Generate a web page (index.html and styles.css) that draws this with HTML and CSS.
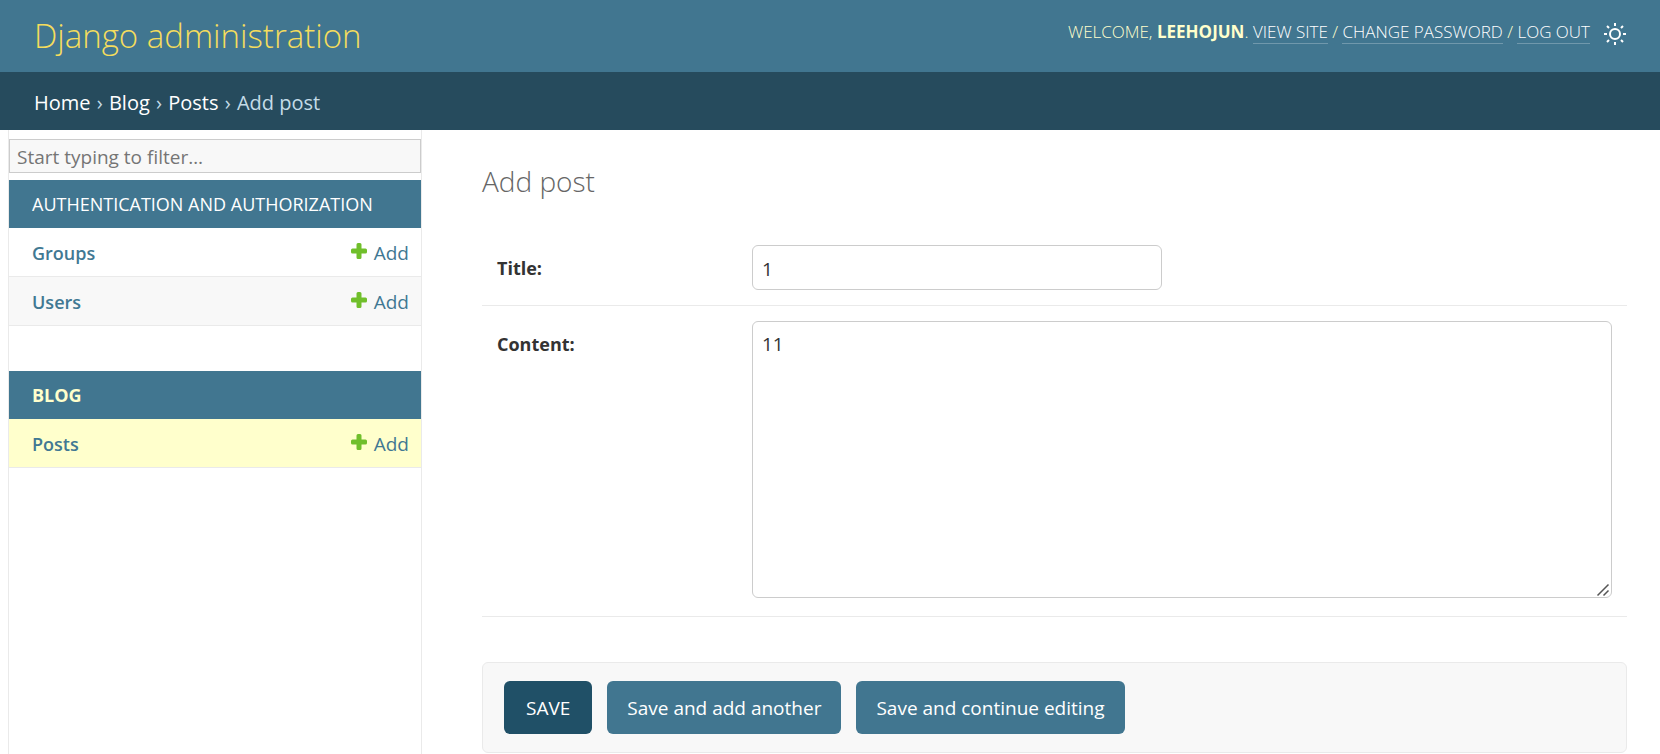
FILE: index.html
```html
<!DOCTYPE html>
<html lang="en">
<head>
<meta charset="utf-8">
<title>Add post | Django site admin</title>
<meta name="viewport" content="width=device-width, initial-scale=1">
<link rel="stylesheet" href="styles.css">
</head>
<body>
<svg class="sprite" aria-hidden="true">
  <symbol id="icon-add" viewBox="0 0 16 16">
    <path fill="#70bf2b" d="M7 0h2a1.500 1.500 0 0 1 1.500 1.500v4h4a1.500 1.500 0 0 1 1.500 1.500v2a1.500 1.500 0 0 1-1.500 1.500h-4v4a1.500 1.500 0 0 1-1.500 1.500h-2a1.500 1.500 0 0 1-1.500-1.500v-4h-4a1.500 1.500 0 0 1-1.500-1.500v-2a1.500 1.500 0 0 1 1.500-1.500h4v-4a1.500 1.500 0 0 1 1.500-1.500z"/>
  </symbol>
</svg>
<header class="header">
  <h1 class="site-name"><a href="#">Django administration</a></h1>
  <div class="user-tools">
    <div>Welcome, <strong>leehojun</strong>. <a href="#">View site</a> / <a href="#">Change password</a> / <a href="#">Log out</a></div>
    <button class="theme-toggle" type="button" aria-label="Toggle theme">
      <svg viewBox="0 0 24 24" width="24" height="24" fill="none" stroke="#fff" stroke-width="2">
        <circle cx="12" cy="12" r="5"/>
        <path d="M12 1v3M12 20v3M1 12h3M20 12h3M4 4l2 2M18 18l2 2M4 20l2-2M18 6l2-2"/>
      </svg>
    </button>
  </div>
</header>
<nav class="breadcrumbs" aria-label="Breadcrumbs">
  <a href="#">Home</a> <span class="separator">›</span>
  <a href="#">Blog</a> <span class="separator">›</span>
  <a href="#">Posts</a> <span class="separator">›</span>
  Add post
</nav>
<div class="main">
  <nav class="sidebar" aria-label="Sidebar">
    <input class="nav-filter" type="search" placeholder="Start typing to filter…" aria-label="Filter navigation items">
    <section class="app">
      <h2 class="app-name"><a href="#">Authentication and Authorization</a></h2>
      <div class="model"><a class="model-name" href="#">Groups</a><a class="add-link" href="#"><svg><use href="#icon-add"/></svg>Add</a></div>
      <div class="model model-alt"><a class="model-name" href="#">Users</a><a class="add-link" href="#"><svg><use href="#icon-add"/></svg>Add</a></div>
    </section>
    <section class="app">
      <h2 class="app-name app-current"><a href="#">Blog</a></h2>
      <div class="model model-current"><a class="model-name" href="#">Posts</a><a class="add-link" href="#"><svg><use href="#icon-add"/></svg>Add</a></div>
    </section>
  </nav>
  <main class="content">
    <h2 class="page-title">Add post</h2>
    <form>
      <div class="form-row">
        <label for="id_title">Title:</label>
        <input class="field text-field" id="id_title" type="text" value="1">
      </div>
      <div class="form-row form-row-area">
        <label for="id_content">Content:</label>
        <textarea class="field area-field" id="id_content">11</textarea>
      </div>
      <div class="submit-row">
        <button class="button button-default" type="submit">SAVE</button>
        <button class="button" type="submit">Save and add another</button>
        <button class="button" type="submit">Save and continue editing</button>
      </div>
    </form>
  </main>
</div>
</body>
</html>
```
FILE: styles.css
```css
* {
  box-sizing: border-box;
}

html {
  height: 100%;
}

body {
  display: flex;
  flex-direction: column;
  min-height: 100%;
  margin: 0;
  background: #fff;
  color: #333;
  font-family: "Open Sans", "Noto Sans", sans-serif;
  font-size: 19px;
  line-height: 28px;
}

a {
  color: #417893;
  text-decoration: none;
}

button,
input,
textarea {
  font: inherit;
}

.sprite {
  display: none;
}

.header {
  display: flex;
  justify-content: space-between;
  align-items: flex-start;
  padding: 0 33px 0 34px;
  background: #417690;
  color: #ffc;
}

.site-name {
  margin: 0;
  font-size: 33px;
  font-weight: 300;
  line-height: 72px;
}

.site-name a {
  color: #f5dd5d;
}

.user-tools {
  display: flex;
  gap: 13px;
  padding-top: 20px;
  font-size: 17px;
  font-weight: 300;
  line-height: 24px;
  text-transform: uppercase;
}

.user-tools strong {
  font-weight: 700;
}

.user-tools a {
  border-bottom: 1px solid rgba(255, 255, 255, 0.25);
  color: #fff;
}

.theme-toggle {
  display: flex;
  padding: 2px 0 0;
  border: 0;
  background: none;
}

.breadcrumbs {
  padding: 17px 34px 13px;
  background: #264b5d;
  color: #c4dce8;
  font-size: 20px;
}

.breadcrumbs a {
  color: #fff;
}

.separator {
  margin: 0 1px;
}

.main {
  display: flex;
  flex: 1;
}

.sidebar {
  flex: 0 0 414px;
  margin-left: 8px;
  padding-top: 9px;
  border: solid #eaeaea;
  border-width: 0 1px;
}

.nav-filter {
  display: block;
  width: 100%;
  height: 34px;
  margin-bottom: 7px;
  padding: 1px 7px 0;
  border: 1px solid #ccc;
  background: #f8f8f8;
}

.nav-filter::placeholder {
  color: #757575;
}

.app {
  margin-bottom: 45px;
}

.app-name {
  margin: 0;
  padding: 10px 23px;
  background: #417690;
  font-size: 18px;
  font-weight: 400;
  text-transform: uppercase;
}

.app-name a {
  color: #fff;
}

.app-current {
  font-weight: 700;
}

.app-current a {
  color: #ffc;
}

.model {
  display: flex;
  justify-content: space-between;
  padding: 11px 12px 9px 23px;
  border-bottom: 1px solid #eaeaea;
}

.model-alt {
  background: #f8f8f8;
}

.model-current {
  background: #ffc;
}

.model-name {
  font-size: 18px;
  font-weight: 600;
}

.add-link {
  display: flex;
  gap: 7px;
}

.add-link svg {
  width: 16px;
  height: 16px;
  margin-top: 4px;
}

.content {
  flex: 1;
  padding: 33px 33px 0 60px;
}

.page-title {
  margin: 0 0 46px;
  color: #666;
  font-size: 28px;
  font-weight: 300;
  line-height: 36px;
}

.form-row {
  display: flex;
  padding: 0 15px 15px;
  border-bottom: 1px solid #eaeaea;
}

.form-row-area {
  padding: 15px 15px 18px;
}

.form-row label {
  flex: 0 0 255px;
  padding-top: 9px;
  font-size: 18px;
  font-weight: 700;
}

.field {
  border: 1px solid #ccc;
  border-radius: 6px;
  background: #fff;
  color: #333;
}

.text-field {
  width: 410px;
  height: 45px;
  padding: 2px 9px 0;
}

.area-field {
  flex: 1;
  height: 277px;
  padding: 8px 9px;
  resize: vertical;
}

.area-field::-webkit-resizer {
  background: url("data:image/svg+xml,%3Csvg xmlns='http://www.w3.org/2000/svg' width='15' height='15'%3E%3Cpath d='M1.500 13.500l11-11M7.500 13.500l5-5' stroke='%23555' stroke-width='1.500'/%3E%3C/svg%3E") no-repeat;
}

.submit-row {
  display: flex;
  gap: 15px;
  margin-top: 45px;
  padding: 18px 21px;
  border: 1px solid #eaeaea;
  border-radius: 6px;
  background: #f8f8f8;
}

.button {
  height: 53px;
  padding: 0 20px;
  border: 0;
  border-radius: 6px;
  background: #417690;
  color: #fff;
}

.button-default {
  padding: 0 22px;
  background: #205067;
}
```
